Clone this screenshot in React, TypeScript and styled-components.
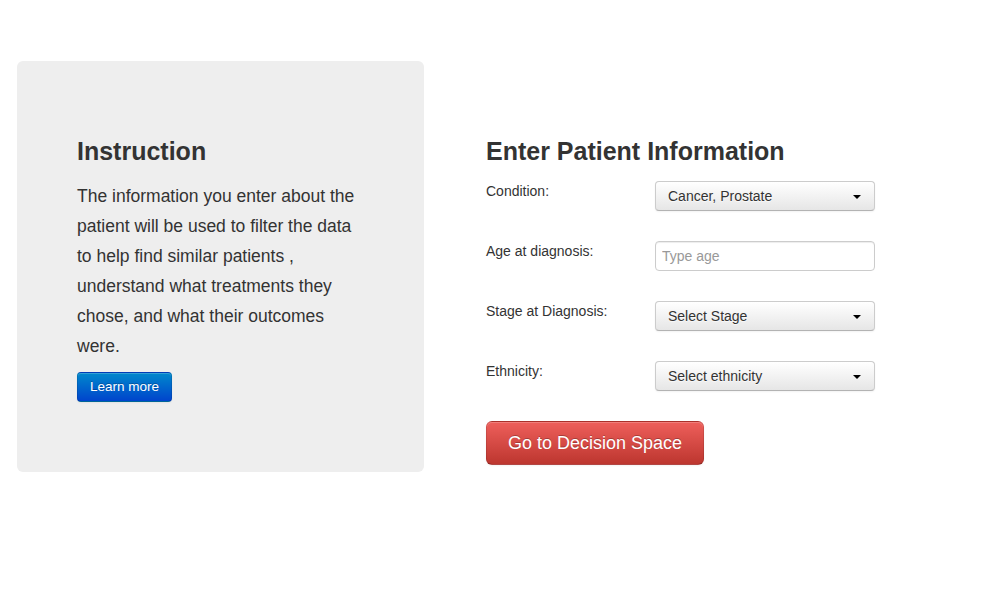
import React from "react";
import styled, { createGlobalStyle } from "styled-components";

const Global = createGlobalStyle`
  html, body { margin: 0; padding: 0; background: #fff; }
  body { font-family: "Liberation Sans", Arial, Helvetica, sans-serif; color: #333; font-size: 14px; line-height: 20px; }
  * { box-sizing: border-box; }
`;

const Page = styled.div`
  display: flex;
  align-items: flex-start;
  gap: 62px;
  padding: 61px 0 0 17px;
`;

const Hero = styled.section`
  width: 407px;
  height: 411px;
  background: #eeeeee;
  border-radius: 6px;
  padding: 60px;
`;

const Heading = styled.h3`
  margin: 10px 0;
  font-size: 25px;
  line-height: 40px;
  font-weight: bold;
  color: #333;
  white-space: nowrap;
`;

const Lead = styled.p`
  margin: 0 0 11px;
  font-size: 17.5px;
  line-height: 30px;
  color: #333;
`;

const BlueButton = styled.button`
  display: inline-block;
  width: 95px;
  height: 30px;
  padding: 4px 0;
  font-family: inherit;
  font-size: 13.5px;
  line-height: 20px;
  color: #fff;
  text-shadow: 0 -1px 0 rgba(0, 0, 0, 0.25);
  background-image: linear-gradient(to bottom, #0088cc, #0044cc);
  border: 1px solid #0044cc;
  border-color: rgba(0, 0, 0, 0.1) rgba(0, 0, 0, 0.1) rgba(0, 0, 0, 0.25);
  border-radius: 4px;
  box-shadow: inset 0 1px 0 rgba(255, 255, 255, 0.2), 0 1px 2px rgba(0, 0, 0, 0.05);
  cursor: pointer;
`;

const FormCol = styled.section`
  display: flex;
  flex-direction: column;
  padding-top: 60px;
`;

const Rows = styled.div`
  display: flex;
  flex-direction: column;
  gap: 30px;
  margin-bottom: 30px;
`;

const Row = styled.div`
  display: grid;
  grid-template-columns: 169px 220px;
  align-items: start;
  height: 30px;
`;

const Label = styled.label`
  font-size: 14px;
  line-height: 20px;
  color: #333;
`;

const Dropdown = styled.button`
  position: relative;
  width: 220px;
  height: 30px;
  padding: 4px 12px;
  text-align: left;
  font-family: inherit;
  font-size: 14px;
  line-height: 20px;
  color: #333;
  text-shadow: 0 1px 1px rgba(255, 255, 255, 0.75);
  background-image: linear-gradient(to bottom, #ffffff, #e6e6e6);
  border: 1px solid #cccccc;
  border-bottom-color: #b3b3b3;
  border-radius: 4px;
  box-shadow: inset 0 1px 0 rgba(255, 255, 255, 0.2), 0 1px 2px rgba(0, 0, 0, 0.05);
  cursor: pointer;
`;

const Caret = styled.span`
  position: absolute;
  right: 13px;
  top: 13px;
  width: 0;
  height: 0;
  border-top: 4px solid #000;
  border-left: 4px solid transparent;
  border-right: 4px solid transparent;
`;

const TextInput = styled.input`
  width: 220px;
  height: 30px;
  padding: 4px 6px;
  font-family: inherit;
  font-size: 14px;
  line-height: 20px;
  color: #555;
  background: #fff;
  border: 1px solid #cccccc;
  border-radius: 4px;
  box-shadow: inset 0 1px 1px rgba(0, 0, 0, 0.075);
  outline: none;
  &::placeholder { color: #999; }
`;

const RedButton = styled.button`
  align-self: flex-start;
  width: 218px;
  height: 44px;
  padding: 11px 0;
  font-family: inherit;
  font-size: 18px;
  line-height: 20px;
  color: #fff;
  text-shadow: 0 -1px 0 rgba(0, 0, 0, 0.25);
  background-image: linear-gradient(to bottom, #ee5f5b, #bd362f);
  border: 1px solid #bd362f;
  border-color: rgba(0, 0, 0, 0.1) rgba(0, 0, 0, 0.1) rgba(0, 0, 0, 0.25);
  border-radius: 6px;
  box-shadow: inset 0 1px 0 rgba(255, 255, 255, 0.2), 0 1px 2px rgba(0, 0, 0, 0.05);
  cursor: pointer;
`;

const fields: { label: string; kind: "select" | "input"; value: string }[] = [
  { label: "Condition:", kind: "select", value: "Cancer, Prostate" },
  { label: "Age at diagnosis:", kind: "input", value: "Type age" },
  { label: "Stage at Diagnosis:", kind: "select", value: "Select Stage" },
  { label: "Ethnicity:", kind: "select", value: "Select ethnicity" },
];

export default function App() {
  return (
    <>
      <Global />
      <Page>
        <Hero>
          <Heading>Instruction</Heading>
          <Lead>
            The information you enter about the patient will be used to filter the data to help find
            similar patients , understand what treatments they chose, and what their outcomes were.
          </Lead>
          <BlueButton>Learn more</BlueButton>
        </Hero>
        <FormCol>
          <Heading>Enter Patient Information</Heading>
          <Rows>
            {fields.map((f) => (
              <Row key={f.label}>
                <Label>{f.label}</Label>
                {f.kind === "select" ? (
                  <Dropdown>
                    {f.value}
                    <Caret />
                  </Dropdown>
                ) : (
                  <TextInput placeholder={f.value} />
                )}
              </Row>
            ))}
          </Rows>
          <RedButton>Go to Decision Space</RedButton>
        </FormCol>
      </Page>
    </>
  );
}
